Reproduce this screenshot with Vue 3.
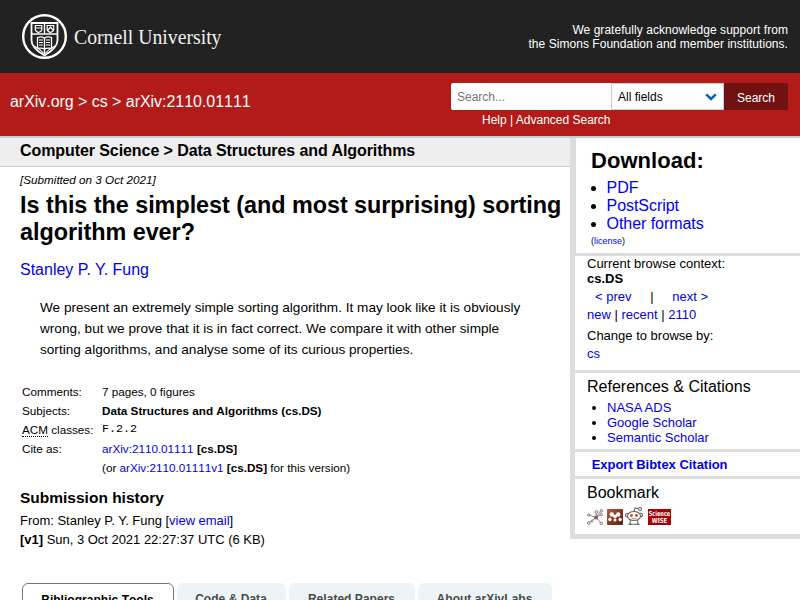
<script setup>
const downloads = ['PDF', 'PostScript', 'Other formats']
const citations = ['NASA ADS', 'Google Scholar', 'Semantic Scholar']
const tabs = ['Bibliographic Tools', 'Code & Data', 'Related Papers', 'About arXivLabs']
</script>

<template>
  <div class="page">
    <header class="cornell">
      <svg class="logo" width="210" height="50" viewBox="0 0 210 50">
        <g fill="none" stroke="#fff">
          <circle cx="24.5" cy="25.5" r="21.3" stroke-width="2.4" />
          <path d="M11.500 12h26v17.500c0 7-7 11.500-13 15c-6-3.500-13-8-13-15z" stroke-width="1.800" />
          <path d="M11.500 23h26M24.500 12v11" stroke-width="1.400" />
          <path d="M15.300 14.500h6.500v4c0 1.500-1.800 2.500-3.200 3c-1.500-.5-3.300-1.500-3.300-3zM27.200 14.500h6.500v4c0 1.500-1.800 2.500-3.200 3c-1.500-.5-3.300-1.500-3.300-3zM15.500 17h6M28 19l2.500-3 2.500 3" stroke-width="1.200" />
          <path d="M17.500 26.500c3-1 5.500-.5 7 .7c1.500-1.200 4-1.700 7-.7v11c-3-.7-5.500-.2-7 .8c-1.500-1-4-1.500-7-.8zM24.500 27v16" stroke-width="1.300" />
          <path d="M19 29h4M19 31.500h4M19 34h4M26 29h4M26 31.500h4M26 34h4M14 35c4 2 7 4 10.500 8c3.500-4 6.500-6 10.500-8" stroke-width="1.100" />
        </g>
        <text x="54" y="33" textLength="147.500" lengthAdjust="spacingAndGlyphs" class="wordmark">Cornell University</text>
      </svg>
      <p class="support">We gratefully acknowledge support from<br />the Simons Foundation and member institutions.</p>
    </header>

    <div class="banner">
      <div class="crumbs">arXiv.org &gt; cs &gt; arXiv:2110.01111</div>
      <div class="search">
        <div class="search-row">
          <input class="query" type="text" placeholder="Search..." />
          <div class="select">
            <span>All fields</span>
            <svg width="12" height="8" viewBox="0 0 12 8"><path d="M1.200 1.300L6 6l4.800-4.700" fill="none" stroke="#0068ac" stroke-width="2.500" /></svg>
          </div>
          <button class="go">Search</button>
        </div>
        <div class="help">Help | Advanced Search</div>
      </div>
    </div>

    <div class="content">
      <main>
        <div class="subject">Computer Science &gt; Data Structures and Algorithms</div>
        <div class="dateline">[Submitted on 3 Oct 2021]</div>
        <h1>Is this the simplest (and most surprising) sorting algorithm ever?</h1>
        <div class="authors"><a>Stanley P. Y. Fung</a></div>
        <p class="abstract">We present an extremely simple sorting algorithm. It may look like it is obviously<br />wrong, but we prove that it is in fact correct. We compare it with other simple<br />sorting algorithms, and analyse some of its curious properties.</p>
        <div class="meta">
          <span>Comments:</span><span>7 pages, 0 figures</span>
          <span>Subjects:</span><b>Data Structures and Algorithms (cs.DS)</b>
          <span><abbr>ACM</abbr> classes:</span><span class="mono">F.2.2</span>
          <span>Cite as:</span><span><a>arXiv:2110.01111</a> <b>[cs.DS]</b></span>
          <span></span><span>(or <a>arXiv:2110.01111v1</a> <b>[cs.DS]</b> for this version)</span>
        </div>
        <h2>Submission history</h2>
        <div class="history">From: Stanley P. Y. Fung [<a>view email</a>]<br /><b>[v1]</b> Sun, 3 Oct 2021 22:27:37 UTC (6 KB)</div>
        <div class="tabs">
          <div v-for="(t, i) in tabs" :key="t" class="tab" :class="['tab-' + i, { active: i === 0 }]">{{ t }}</div>
        </div>
      </main>

      <aside>
        <section class="download">
          <h2>Download:</h2>
          <ul><li v-for="d in downloads" :key="d"><a>{{ d }}</a></li></ul>
          <div class="license">(<a>license</a>)</div>
        </section>
        <section class="browse">
          <div class="context">Current browse context:<br /><b>cs.DS</b></div>
          <div class="prevnext"><a>&lt; prev</a><span>|</span><a>next &gt;</a></div>
          <div class="line"><a>new</a> | <a>recent</a> | <a>2110</a></div>
          <div class="change">Change to browse by:</div>
          <div class="line"><a>cs</a></div>
        </section>
        <section class="refs">
          <h3>References &amp; Citations</h3>
          <ul><li v-for="c in citations" :key="c"><a>{{ c }}</a></li></ul>
        </section>
        <section class="export"><a>Export Bibtex Citation</a></section>
        <section class="bookmark">
          <h3>Bookmark</h3>
          <div class="icons">
            <svg width="16" height="16" viewBox="0 0 16 16">
              <path d="M2 6l7 2.500L14 2M9 8.500L9.500 3M9 8.500L14 5.500M9 8.500L2 14M9 8.500L14 14" fill="none" stroke="#888" />
              <g fill="#eee" stroke="#777" stroke-width=".9"><circle cx="1.700" cy="6" r="1.200" /><circle cx="9.500" cy="3" r="1.400" /><circle cx="14.300" cy="1.800" r="1.300" /><circle cx="14.300" cy="5.500" r="1.200" /><circle cx="1.800" cy="14" r="1.400" /><circle cx="14.300" cy="14.300" r="1.300" /><circle cx="5" cy="12" r="1" /></g>
              <circle cx="9" cy="8.500" r="1.900" fill="#a34b68" />
            </svg>
            <svg class="mendeley" width="16" height="16" viewBox="0 0 16 16">
              <defs><linearGradient id="rust" x2="1" y2="1"><stop stop-color="#b45f45" /><stop offset=".5" stop-color="#8b3822" /><stop offset="1" stop-color="#5a2013" /></linearGradient></defs>
              <rect width="16" height="16" rx="1" fill="url(#rust)" />
              <g fill="#fff"><circle cx="4.800" cy="5.500" r="2.200" /><circle cx="11.200" cy="5.500" r="2.200" /><circle cx="8" cy="7.300" r="1.900" /><circle cx="2.900" cy="10.500" r="1.700" /><circle cx="8" cy="11" r="1.500" /><circle cx="13.100" cy="10.500" r="1.700" /></g>
            </svg>
            <svg class="reddit" width="18" height="18" viewBox="0 0 18 18">
              <g fill="#fff" stroke="#666" stroke-width="1.100"><path d="M9 5l1-4 4 .8" fill="none" /><circle cx="15" cy="2" r="1.500" /><circle cx="2.300" cy="8" r="1.800" /><circle cx="15.700" cy="8" r="1.800" /><path d="M5.500 12L5 17.300h8l-.5-5.300" /><path d="M3.500 17.400h3M11.500 17.400h3" /><ellipse cx="9" cy="9" rx="6.500" ry="4.500" /></g>
              <circle cx="6.500" cy="8.500" r="1.400" fill="#f23b12" /><circle cx="11.500" cy="8.500" r="1.400" fill="#f23b12" />
              <path d="M6.500 11.300q2.500 1.300 5 0" fill="none" stroke="#777" stroke-width=".8" />
            </svg>
            <svg class="wise" width="23" height="16" viewBox="0 0 23 16">
              <rect width="23" height="16" fill="#a60000" />
              <text x="11.500" y="7" textLength="21.500" lengthAdjust="spacingAndGlyphs">Science</text>
              <text x="11.500" y="14" textLength="15.500" lengthAdjust="spacingAndGlyphs">WISE</text>
            </svg>
          </div>
        </section>
      </aside>
    </div>
  </div>
</template>

<style>
body { margin: 0; background: #fff; overflow: hidden; }
</style>

<style scoped>
.page { width: 800px; height: 600px; overflow: hidden; font-family: "Liberation Sans", Arial, sans-serif; font-size: 13px; color: #000; }
.page * { box-sizing: border-box; }
a { color: #00e; }
h1, h2, h3, p, ul { margin: 0; }
.cornell { height: 73px; background: #222; color: #fff; display: flex; justify-content: space-between; padding: 11px 12px 0 20px; }
.logo { overflow: visible; }
.wordmark { font-family: "Liberation Serif", serif; font-size: 21.500px; fill: #f0f0f0; }
.support { font-size: 12px; line-height: 14px; letter-spacing: .045px; text-align: right; padding-top: 12px; }
.banner { height: 65px; background: #b31b1b; border-bottom: 2px solid #ccc; color: #fff; display: flex; justify-content: space-between; padding: 10px 12px 0 10px; }
.crumbs { font-size: 16px; line-height: 18px; padding-top: 10px; font-kerning: none; letter-spacing: -.04px; }
.search { width: 337px; font-size: 12px; }
.search-row { display: flex; height: 27px; }
.query { width: 160px; height: 27px; border: 0; padding: 0 6px; border-radius: 2px 0 0 2px; font: 12px "Liberation Sans", sans-serif; background: #fff; }
.query::placeholder { color: #757575; }
.select { width: 113px; background: #fff; color: #000; border: 1px solid #ccc; display: flex; align-items: center; justify-content: space-between; padding: 0 6px; }
.go { width: 64px; border: 0; border-radius: 0 2px 2px 0; background: #701112; color: #fff; font: 12px "Liberation Sans", sans-serif; padding: 3px 0 0; }
.help { padding: 3px 0 0 31px; line-height: 14px; }
.content { display: flex; align-items: flex-start; }
main { width: 570px; }
.subject { height: 29px; background: #eee; border-bottom: 1px solid #ccc; font-size: 16px; font-weight: bold; line-height: 25px; padding-left: 20px; letter-spacing: -.08px; }
.dateline { font-size: 11.700px; font-style: italic; line-height: 14px; margin: 6px 0 0 20px; }
h1 { font-size: 23.400px; line-height: 27px; margin: 5px 0 0 20px; letter-spacing: -.04px; }
.authors { font-size: 16px; line-height: 18px; margin: 15px 0 0 20px; }
.abstract { font-size: 13.600px; line-height: 21px; margin: 18px 0 0 40px; white-space: nowrap; }
.meta { display: grid; grid-template-columns: 80px auto; grid-auto-rows: 19px; line-height: 19px; font-size: 11.700px; margin: 22px 0 0 22px; white-space: nowrap; font-kerning: none; }
abbr { border-bottom: 1px dotted #000; }
.mono { font-family: "Liberation Mono", monospace; line-height: 19px; }
main h2 { font-size: 15.500px; line-height: 18px; margin: 12px 0 0 20px; }
.history { line-height: 19px; margin: 4px 0 0 20px; letter-spacing: -.02px; }
.tabs { display: flex; gap: 3px; margin: 34px 0 0 22px; }
.tab { height: 40px; border-radius: 6px 6px 0 0; background: #ecf4f8; color: #4a4a4a; font-size: 12px; font-weight: bold; line-height: 32px; text-align: center; font-kerning: none; padding-right: 1px; letter-spacing: .03px; }
.tab-0 { width: 152px; }
.tab-1 { width: 109px; }
.tab-2 { width: 126px; }
.tab-3 { width: 134px; }
.active { background: #fff; color: #000; border: 1px solid #777; }
aside { width: 230px; height: 401px; border-left: 5px solid #ddd; border-bottom: 5px solid #ddd; }
section { border-bottom: 3px solid #ddd; padding-left: 12px; }
.download { height: 118px; border-left: 1px solid #ddd; padding: 10px 0 0 15px; }
.download h2 { font-size: 22px; line-height: 26px; letter-spacing: .05px; }
.download ul { padding-left: 15.600px; margin-top: 5px; font-size: 16px; line-height: 18px; letter-spacing: -.06px; }
.license { font-size: 9px; line-height: 12px; margin-top: 2px; }
.browse { height: 117px; }
.context { line-height: 15px; }
.prevnext { display: flex; line-height: 18px; padding-left: 8px; margin-top: 2px; }
.prevnext span { margin: 0 18.700px; }
.line { line-height: 18px; }
.change { line-height: 18px; margin-top: 3px; }
h3 { font-size: 16px; font-weight: normal; line-height: 18px; }
.refs { height: 79px; padding-top: 5px; }
.refs ul { padding-left: 20px; line-height: 15px; margin-top: 4px; }
.export { height: 27px; padding-left: 16.700px; font-weight: bold; line-height: 25px; letter-spacing: -.03px; }
.bookmark { border: 0; padding-top: 5px; }
.icons { display: flex; margin-top: 5px; align-items: flex-end; height: 18px; }
.mendeley { margin-left: 4px; }
.reddit { margin-left: 2px; }
.wise { margin-left: 5px; }
.wise text { fill: #fff; font: bold 7px "DejaVu Sans", sans-serif; text-anchor: middle; }
</style>
